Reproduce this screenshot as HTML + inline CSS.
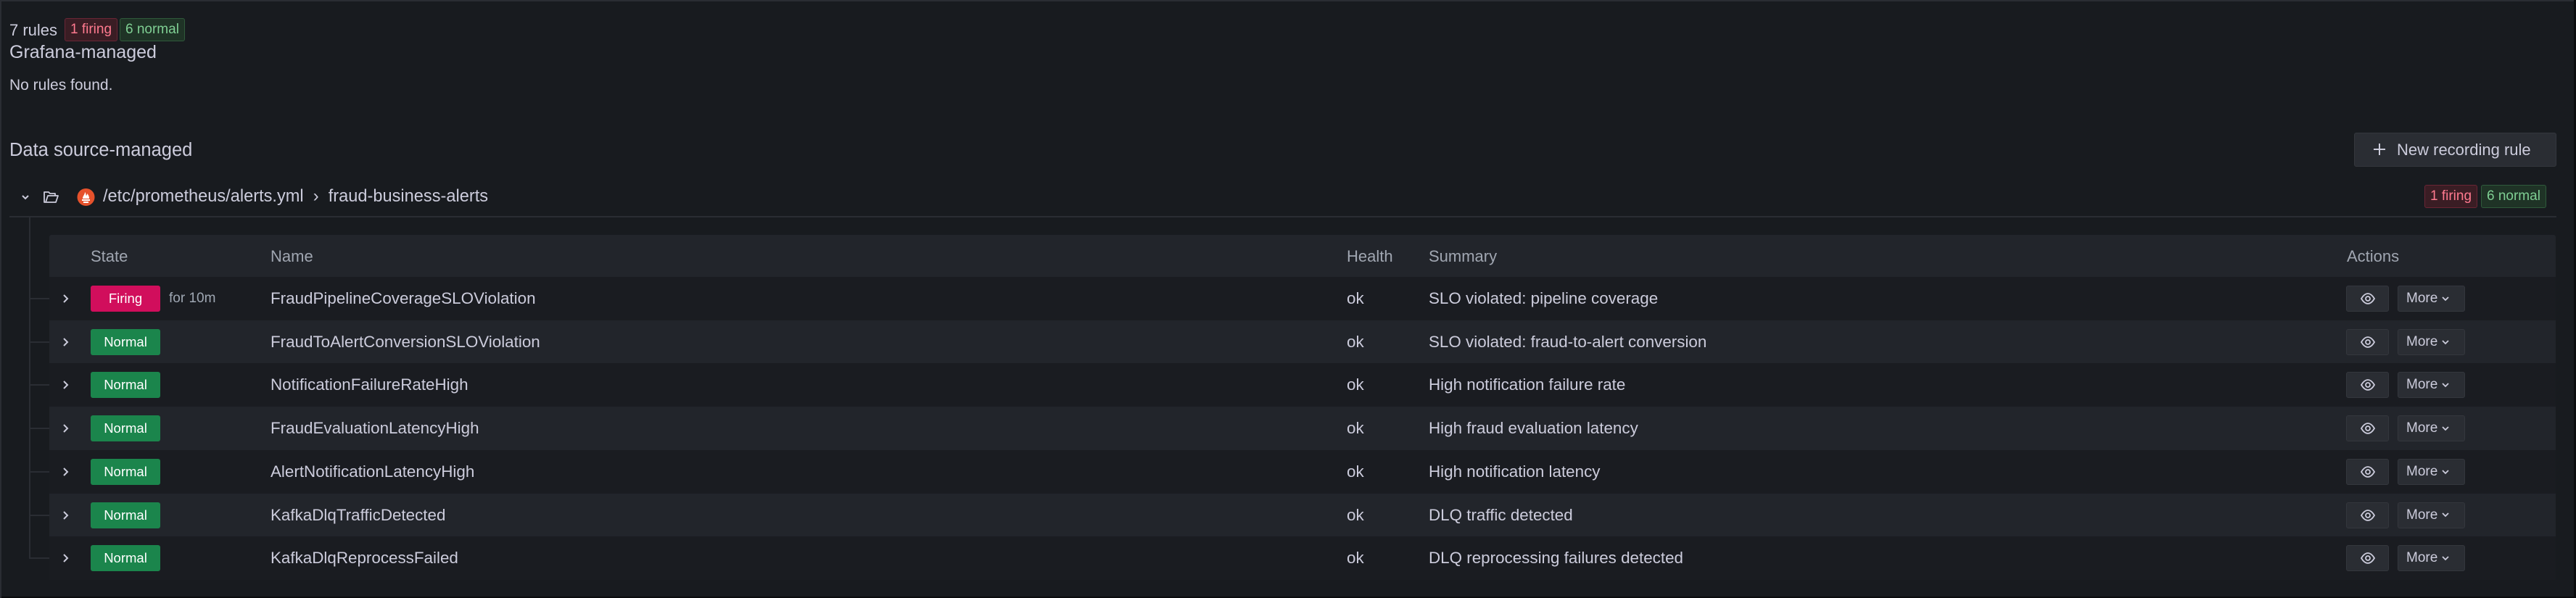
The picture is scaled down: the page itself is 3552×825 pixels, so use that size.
<!DOCTYPE html>
<html><head><meta charset="utf-8"><style>
*{box-sizing:border-box;margin:0;padding:0}
body{width:3552px;height:825px;background:#181b1f;font-family:"Liberation Sans",sans-serif;color:#ccccdc;position:relative;overflow:hidden;box-shadow:inset -3px 0 0 #0b0c0e,inset 0 2px 0 #2a2d33,inset 2px 0 0 #2a2d33,inset 0 -2px 0 #0b0c0e}
#w{position:absolute;left:0;top:2px;width:3552px;height:823px}
.a{position:absolute;white-space:nowrap}
.tb{position:absolute;height:32px;line-height:30px;font-size:19px;padding:0 7px;border-radius:3px;border:1px solid}
.fr{background:#3a1d24;border-color:#6a2535;color:#ff7a8f}
.nr{background:#1f3326;border-color:#2f5a3b;color:#7fcf93}
.row{position:absolute;left:69px;width:3456px;height:60px;font-size:22.4px}
.row span{position:absolute;top:50%;transform:translateY(-50%);white-space:nowrap}
.badge{position:absolute;left:57px;width:96px;height:36px;top:12px;border-radius:3px;color:#fff;font-size:18.5px;text-align:center;line-height:36px}
.btn{position:absolute;top:12px;height:36px;background:#2a2d33;border:1px solid #34373d;border-radius:3px;color:#ccccdc;font-size:19px;line-height:34px}
</style></head><body><div id="w">
<div class="a" style="left:13px;top:27px;font-size:22px">7 rules</div>
<div class="tb fr" style="left:89px;top:23px">1 firing</div>
<div class="tb nr" style="left:165px;top:23px">6 normal</div>
<div class="a" style="left:13px;top:56px;font-size:25px">Grafana-managed</div>
<div class="a" style="left:13px;top:104px;font-size:21px">No rules found.</div>
<div class="a" style="left:13px;top:191px;font-size:25.5px">Data source-managed</div>
<div class="a" style="left:3246px;top:181px;width:279px;height:47px;background:#2a2d33;border:1px solid #34373d;border-radius:3px;font-size:22px;line-height:45px;padding-left:58px">New recording rule</div>
<svg class="a" style="left:3271px;top:194px" width="20" height="20"><path d="M10 2v16M2 10h16" stroke="#ccccdc" stroke-width="2"/></svg>
<svg class="a" style="left:28px;top:263px" width="14" height="14"><path d="M3 5l4 4 4-4" stroke="#ccccdc" stroke-width="2" fill="none"/></svg>
<svg class="a" style="left:58px;top:258px" width="24" height="24"><path d="M3 5h6l2 2h7v3H8l-3 9H3zM8 10h14l-3 9H5z" stroke="#ccccdc" stroke-width="1.8" fill="none" stroke-linejoin="round"/></svg>
<svg class="a" style="left:106px;top:257px" width="25" height="26"><circle cx="12.5" cy="13" r="12" fill="#e6522c"/><path d="M8 15c0-4 3-5 3-9 2 2 1 4 2 5 1-1 1-2 1-3 2 2 3 4 3 7z M7 16h11v2H7zM9 19h7v2H9z" fill="#fff"/></svg>
<div class="a" style="left:142px;top:256px;font-size:23.6px">/etc/prometheus/alerts.yml &nbsp;›&nbsp; fraud-business-alerts</div>
<div class="tb fr" style="left:3343px;top:253px">1 firing</div>
<div class="tb nr" style="left:3421px;top:253px">6 normal</div>
<div class="a" style="left:13px;top:296px;width:3512px;height:2px;background:#2a2d33"></div>
<div class="a" style="left:40px;top:298px;width:2px;height:471px;background:#2a2d33"></div>
<div class="a" style="left:68px;top:322px;width:3456px;height:58px;background:#22252b;border-radius:3px 3px 0 0;font-size:22px;color:#a0a6b1">
<span class="a" style="left:57px;top:17px">State</span><span class="a" style="left:305px;top:17px">Name</span><span class="a" style="left:1789px;top:17px">Health</span><span class="a" style="left:1902px;top:17px">Summary</span><span class="a" style="left:3168px;top:17px">Actions</span></div>
<div id="rows"></div>
</div>
<script>
var d=[["Firing","FraudPipelineCoverageSLOViolation","SLO violated: pipeline coverage"],["Normal","FraudToAlertConversionSLOViolation","SLO violated: fraud-to-alert conversion"],["Normal","NotificationFailureRateHigh","High notification failure rate"],["Normal","FraudEvaluationLatencyHigh","High fraud evaluation latency"],["Normal","AlertNotificationLatencyHigh","High notification latency"],["Normal","KafkaDlqTrafficDetected","DLQ traffic detected"],["Normal","KafkaDlqReprocessFailed","DLQ reprocessing failures detected"]];
var h="";d.forEach(function(r,i){var t=380+i*59.7;var bg=i%2?"#22252b":"#1a1c21";
h+='<div class="a" style="left:40px;top:'+(t+29)+'px;width:28px;height:2px;background:#2a2d33"></div>';
h+='<div class="row" style="left:68px;top:'+t+'px;background:'+bg+'">'+
'<svg class="a" style="left:16px;top:23px" width="12" height="14"><path d="M4 2l5 5-5 5" stroke="#ccccdc" stroke-width="2" fill="none"/></svg>'+
'<div class="badge" style="background:'+(r[0]=="Firing"?"#d10e5c":"#1b854c")+'">'+r[0]+'</div>'+
(r[0]=="Firing"?'<span style="left:165px;font-size:19px;color:#9fa7b3">for 10m</span>':'')+
'<span style="left:305px">'+r[1]+'</span><span style="left:1789px">ok</span><span style="left:1902px">'+r[2]+'</span>'+
'<div class="btn" style="left:3167px;width:59px"><svg style="position:absolute;left:19px;top:9px" width="20" height="16"><path d="M1 8c3-5 6-7 9-7s6 2 9 7c-3 5-6 7-9 7s-6-2-9-7z" stroke="#ccccdc" stroke-width="1.8" fill="none"/><circle cx="10" cy="8" r="3" stroke="#ccccdc" stroke-width="1.8" fill="none"/></svg></div>'+
'<div class="btn" style="left:3238px;width:93px;padding-left:11px">More <svg width="10" height="8" style="vertical-align:middle"><path d="M1 2l4 4 4-4" stroke="#ccccdc" stroke-width="1.8" fill="none"/></svg></div></div>';});
document.getElementById("rows").innerHTML=h;
</script>
</body></html>
